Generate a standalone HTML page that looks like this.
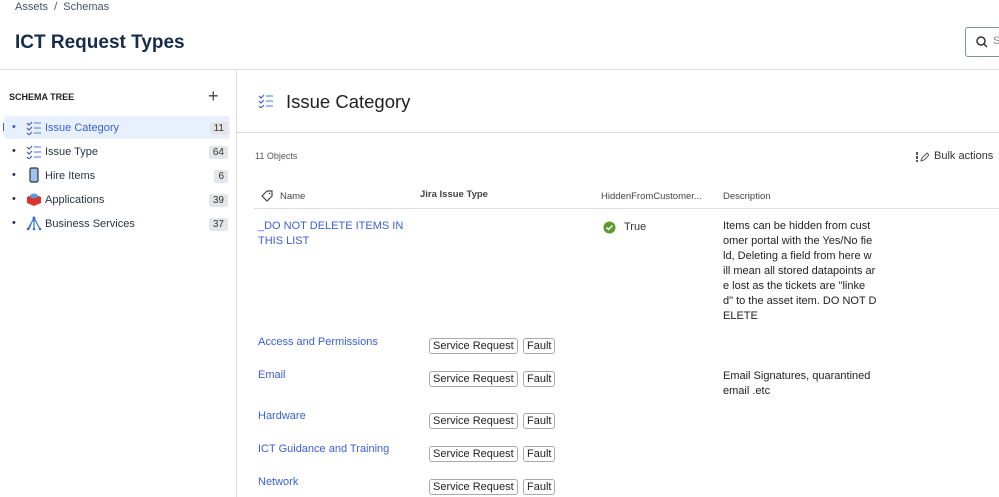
<!DOCTYPE html>
<html><head><style>
body{margin:0;width:999px;height:497px;overflow:hidden;font-family:"Liberation Sans",sans-serif;background:#fff;color:#172b4d;position:relative}
.a{position:absolute;white-space:nowrap}
.lnk{color:#3a5fd9;font-size:11px}
.tag{position:absolute;border:1px solid #aaa;border-radius:3px;font-size:11px;padding:1px 3px;color:#222;line-height:12px}
.cnt{position:absolute;right:0;background:#e4e5e8;font-size:10px;color:#333;padding:1px 4px;border-radius:2px}
.row{position:absolute;left:12px;width:216px;height:22px;font-size:11px;color:#2c3440}
</style></head><body>
<div class="a" style="left:15px;top:1px;font-size:11px;color:#44546f">Assets &nbsp;/ &nbsp;Schemas</div>
<div class="a" style="left:15px;top:32px;font-size:19px;font-weight:bold;color:#172b4d">ICT Request Types</div>
<div class="a" style="left:965px;top:27px;width:40px;height:28px;border:1px solid #8590a2;border-radius:3px"><svg width="12" height="12" style="position:absolute;left:10px;top:8px"><circle cx="5" cy="5" r="4" fill="none" stroke="#333" stroke-width="1.5"/><line x1="8" y1="8" x2="11" y2="11" stroke="#333" stroke-width="1.5"/></svg><span style="position:absolute;left:27px;top:7px;font-size:11px;color:#888">S</span></div>
<div class="a" style="left:0;top:69px;width:999px;height:1px;background:#ddd"></div>
<div class="a" style="left:236px;top:70px;width:1px;height:427px;background:#ddd"></div>
<div class="a" style="left:9px;top:92px;font-size:9px;font-weight:bold;color:#222">SCHEMA TREE</div>
<div class="a" style="left:208px;top:86px;font-size:18px;color:#444">+</div>
<div class="a" style="left:4px;top:116px;width:226px;height:23px;background:#e9f0fd;border-radius:3px"></div>
<div class="a" style="left:3px;top:123px;width:1px;height:8px;background:#3a5fd9"></div>
<div class="row" style="top:121px"><span class="a" style="left:0;top:0;color:#3a5fd9">•</span><svg class="a" style="left:14px;top:0" width="16" height="14"><path d="M1 2l2 2 3-3M1 7l2 2 3-3M1 12l2 2 3-3" stroke="#4a5ac8" fill="none" stroke-width="1.2"/><path d="M8 2h7M8 7h7M8 12h7" stroke="#7fa8e8" stroke-width="1.4"/></svg><span class="a" style="left:33px;top:1px;color:#3a5fd9">Issue Category</span><span class="cnt" style="top:1px">11</span></div>
<div class="row" style="top:145px"><span class="a" style="left:0;top:0">•</span><svg class="a" style="left:14px;top:0" width="16" height="14"><path d="M1 2l2 2 3-3M1 7l2 2 3-3M1 12l2 2 3-3" stroke="#4a5ac8" fill="none" stroke-width="1.2"/><path d="M8 2h7M8 7h7M8 12h7" stroke="#7fa8e8" stroke-width="1.4"/></svg><span class="a" style="left:33px;top:1px">Issue Type</span><span class="cnt" style="top:1px">64</span></div>
<div class="row" style="top:169px"><span class="a" style="left:0;top:0">•</span><svg class="a" style="left:17px;top:-2px" width="10" height="16"><rect x="1" y="1" width="8" height="14" rx="1.5" fill="#9cc2f0" stroke="#333" stroke-width="1.2"/></svg><span class="a" style="left:33px;top:1px">Hire Items</span><span class="cnt" style="top:1px">6</span></div>
<div class="row" style="top:193px"><span class="a" style="left:0;top:0">•</span><svg class="a" style="left:14px;top:-2px" width="16" height="16"><path d="M1 6l7-3 7 3v6l-7 3-7-3z" fill="#d9352b"/><ellipse cx="8" cy="5" rx="4" ry="2.5" fill="#5b9be0"/></svg><span class="a" style="left:33px;top:1px">Applications</span><span class="cnt" style="top:1px">39</span></div>
<div class="row" style="top:217px"><span class="a" style="left:0;top:0">•</span><svg class="a" style="left:14px;top:-1px" width="16" height="15"><path d="M8 2L2 13M8 2l6 11M8 2v11M5 8l-2 5" stroke="#3a6fd0" fill="none" stroke-width="1.2"/><circle cx="8" cy="2" r="1.5" fill="#3a6fd0"/><circle cx="2" cy="13" r="1.3" fill="#3a6fd0"/><circle cx="14" cy="13" r="1.3" fill="#3a6fd0"/><circle cx="8" cy="13" r="1.3" fill="#3a6fd0"/></svg><span class="a" style="left:33px;top:1px">Business Services</span><span class="cnt" style="top:1px">37</span></div>

<svg class="a" style="left:258px;top:94px" width="16" height="14"><path d="M1 2l2 2 3-3M1 7l2 2 3-3M1 12l2 2 3-3" stroke="#4a5ac8" fill="none" stroke-width="1.2"/><path d="M8 2h7M8 7h7M8 12h7" stroke="#7fa8e8" stroke-width="1.4"/></svg>
<div class="a" style="left:286px;top:91px;font-size:18.5px;color:#222">Issue Category</div>
<div class="a" style="left:237px;top:132px;width:762px;height:1px;background:#ddd"></div>
<div class="a" style="left:255px;top:151px;font-size:9px;color:#555">11 Objects</div>
<svg class="a" style="left:915px;top:151px" width="14" height="12"><rect x="1" y="1" width="2" height="3" fill="#555"/><rect x="1" y="5" width="2" height="3" fill="#555"/><rect x="1" y="9" width="2" height="2" fill="#555"/><path d="M6 10l1-3 5-5 2 2-5 5z" fill="none" stroke="#555"/></svg>
<div class="a" style="left:934px;top:150px;font-size:11px;color:#333">Bulk actions</div>
<svg class="a" style="left:261px;top:190px" width="12" height="12"><path d="M1 6l5-5h5v5l-5 5z" fill="none" stroke="#444" stroke-width="1.2"/><circle cx="8.5" cy="3.5" r="0.8" fill="#444"/></svg>
<div class="a" style="left:280px;top:191px;font-size:9.5px;color:#444">Name</div>
<div class="a" style="left:420px;top:189px;font-size:9.5px;font-weight:bold;color:#444">Jira Issue Type</div>
<div class="a" style="left:601px;top:191px;font-size:9.5px;color:#444">HiddenFromCustomer...</div>
<div class="a" style="left:723px;top:191px;font-size:9.5px;color:#444">Description</div>
<div class="a" style="left:254px;top:208px;width:745px;height:1px;background:#ddd"></div>

<div class="a lnk" style="left:258px;top:219px;line-height:15px">_DO NOT DELETE ITEMS IN<br>THIS LIST</div>
<svg class="a" style="left:603px;top:221px" width="13" height="13"><circle cx="6.5" cy="6.5" r="6" fill="#5b9a2c"/><path d="M3.5 6.5l2 2 4-4" stroke="#fff" stroke-width="1.5" fill="none"/></svg>
<div class="a" style="left:624px;top:221px;font-size:11px;color:#333">True</div>
<div class="a" style="left:723px;top:219px;font-size:11px;color:#222;line-height:15px">Items can be hidden from cust<br>omer portal with the Yes/No fie<br>ld, Deleting a field from here w<br>ill mean all stored datapoints ar<br>e lost as the tickets are "linke<br>d" to the asset item. DO NOT D<br>ELETE</div>

<div class="a lnk" style="left:258px;top:336px">Access and Permissions</div>
<div class="tag" style="left:429px;top:338px">Service Request</div><div class="tag" style="left:523px;top:338px">Fault</div>
<div class="a lnk" style="left:258px;top:369px">Email</div>
<div class="tag" style="left:429px;top:371px">Service Request</div><div class="tag" style="left:523px;top:371px">Fault</div>
<div class="a" style="left:723px;top:369px;font-size:11px;color:#222;line-height:15px">Email Signatures, quarantined<br>email .etc</div>
<div class="a lnk" style="left:258px;top:410px">Hardware</div>
<div class="tag" style="left:429px;top:413px">Service Request</div><div class="tag" style="left:523px;top:413px">Fault</div>
<div class="a lnk" style="left:258px;top:443px">ICT Guidance and Training</div>
<div class="tag" style="left:429px;top:446px">Service Request</div><div class="tag" style="left:523px;top:446px">Fault</div>
<div class="a lnk" style="left:258px;top:476px">Network</div>
<div class="tag" style="left:429px;top:479px">Service Request</div><div class="tag" style="left:523px;top:479px">Fault</div>
</body></html>
